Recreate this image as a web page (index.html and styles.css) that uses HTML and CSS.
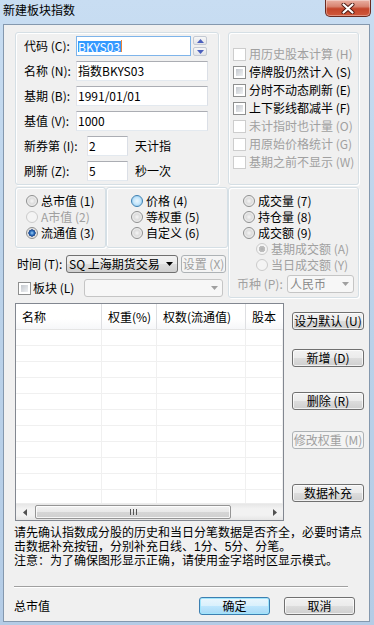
FILE: index.html
```html
<!DOCTYPE html>
<html lang="zh-CN">
<head>
  <meta charset="UTF-8">
  <title>新建板块指数</title>
  <link rel="stylesheet" href="styles.css">
</head>
<body>
  <div class="titlebar">
    <span class="title">新建板块指数</span>
    <div class="close">
      <svg width="14" height="11" viewBox="0 0 14 11">
        <path d="M2.5 1.5 L11.5 9.5 M11.5 1.5 L2.5 9.5" stroke="#4a1710" stroke-width="4" stroke-linecap="round"/>
        <path d="M2.5 1.5 L11.5 9.5 M11.5 1.5 L2.5 9.5" stroke="#fff" stroke-width="2.2" stroke-linecap="round"/>
      </svg>
    </div>
  </div>

  <div class="client">
    <!-- infos de base + options -->
    <div class="top">
      <div class="group main-info">
        <div class="field">
          <label>代码 (C):</label>
          <div class="input code"><span class="sel">BKYS03</span><span class="caret"></span></div>
          <div class="spin">
            <span class="spin-btn"><svg width="7" height="4"><path d="M0 4 L3.5 0 L7 4Z" fill="#4b5fbd"/></svg></span>
            <span class="spin-btn"><svg width="7" height="4"><path d="M0 0 L3.5 4 L7 0Z" fill="#4b5fbd"/></svg></span>
          </div>
        </div>
        <div class="field">
          <label>名称 (N):</label>
          <div class="input">指数BKYS03</div>
        </div>
        <div class="field">
          <label>基期 (B):</label>
          <div class="input">1991/01/01</div>
        </div>
        <div class="field">
          <label>基值 (V):</label>
          <div class="input">1000</div>
        </div>
        <div class="field">
          <label class="wide">新券第 (I):</label>
          <div class="input small">2</div>
          <span class="unit">天计指</span>
        </div>
        <div class="field">
          <label class="wide">刷新 (Z):</label>
          <div class="input small">5</div>
          <span class="unit">秒一次</span>
        </div>
      </div>

      <div class="group options">
        <div class="check disabled"><span class="box"></span>用历史股本计算 (H)</div>
        <div class="check"><span class="box"></span>停牌股仍然计入 (S)</div>
        <div class="check"><span class="box"></span>分时不动态刷新 (E)</div>
        <div class="check"><span class="box"></span>上下影线都减半 (F)</div>
        <div class="check disabled"><span class="box"></span>未计指时也计量 (O)</div>
        <div class="check disabled"><span class="box"></span>用原始价格统计 (G)</div>
        <div class="check disabled"><span class="box"></span>基期之前不显示 (W)</div>
      </div>
    </div>

    <!-- mode de pondération -->
    <div class="mid">
      <div class="mid-left">
        <div class="radio-groups">
          <div class="group rg1">
            <div class="radio"><span class="dot"></span>总市值 (1)</div>
            <div class="radio disabled"><span class="dot"></span>A市值 (2)</div>
            <div class="radio"><span class="dot on"></span>流通值 (3)</div>
          </div>
          <div class="group rg2">
            <div class="radio"><span class="dot hot"></span>价格 (4)</div>
            <div class="radio"><span class="dot"></span>等权重 (5)</div>
            <div class="radio"><span class="dot"></span>自定义 (6)</div>
          </div>
        </div>
        <div class="time-row">
          <span class="time-label">时间 (T):</span>
          <div class="combo">
            <span>SQ 上海期货交易</span>
            <svg class="arrow" width="7" height="4"><path d="M0 0 L3.5 4 L7 0Z" fill="#000"/></svg>
          </div>
          <div class="btn disabled set-btn">设置 (X)</div>
        </div>
        <div class="block-row">
          <span class="box"></span>
          <span class="block-label">板块 (L)</span>
          <div class="combo off block-combo">
            <svg class="arrow" width="7" height="4"><path d="M0 0 L3.5 4 L7 0Z" fill="#a0a0a0"/></svg>
          </div>
        </div>
      </div>

      <div class="group trade">
        <div class="radio"><span class="dot"></span>成交量 (7)</div>
        <div class="radio"><span class="dot"></span>持仓量 (8)</div>
        <div class="radio"><span class="dot"></span>成交额 (9)</div>
        <div class="radio sub disabled"><span class="dot on"></span>基期成交额 (A)</div>
        <div class="radio sub disabled"><span class="dot"></span>当日成交额 (Y)</div>
        <div class="currency">
          <span class="cur-label">币种 (P):</span>
          <div class="combo off cur-combo">
            <span>人民币</span>
            <svg class="arrow" width="7" height="4"><path d="M0 0 L3.5 4 L7 0Z" fill="#a0a0a0"/></svg>
          </div>
        </div>
      </div>
    </div>

    <!-- liste des composants -->
    <div class="list-area">
      <div class="list">
        <div class="thead">
          <div class="c1">名称</div>
          <div class="c2">权重(%)</div>
          <div class="c3">权数(流通值)</div>
          <div class="c4">股本</div>
        </div>
        <div class="tbody">
          <div class="tr"><div class="c1"></div><div class="c2"></div><div class="c3"></div><div class="c4"></div></div>
          <div class="tr"><div class="c1"></div><div class="c2"></div><div class="c3"></div><div class="c4"></div></div>
          <div class="tr"><div class="c1"></div><div class="c2"></div><div class="c3"></div><div class="c4"></div></div>
          <div class="tr"><div class="c1"></div><div class="c2"></div><div class="c3"></div><div class="c4"></div></div>
          <div class="tr"><div class="c1"></div><div class="c2"></div><div class="c3"></div><div class="c4"></div></div>
          <div class="tr"><div class="c1"></div><div class="c2"></div><div class="c3"></div><div class="c4"></div></div>
          <div class="tr"><div class="c1"></div><div class="c2"></div><div class="c3"></div><div class="c4"></div></div>
          <div class="tr"><div class="c1"></div><div class="c2"></div><div class="c3"></div><div class="c4"></div></div>
          <div class="tr"><div class="c1"></div><div class="c2"></div><div class="c3"></div><div class="c4"></div></div>
          <div class="tr"><div class="c1"></div><div class="c2"></div><div class="c3"></div><div class="c4"></div></div>
          <div class="tr"><div class="c1"></div><div class="c2"></div><div class="c3"></div><div class="c4"></div></div>
        </div>
        <div class="hscroll">
          <span class="sb-arrow"><svg width="4" height="7"><path d="M4 0 L0 3.5 L4 7Z" fill="#505050"/></svg></span>
          <div class="thumb"><span class="grip"></span></div>
          <span class="sb-arrow right"><svg width="4" height="7"><path d="M0 0 L4 3.5 L0 7Z" fill="#505050"/></svg></span>
        </div>
      </div>

      <div class="side">
        <div class="btn b-default">设为默认 (U)</div>
        <div class="btn b-add">新增 (D)</div>
        <div class="btn b-del">删除 (R)</div>
        <div class="btn disabled b-edit">修改权重 (M)</div>
        <div class="btn b-fill">数据补充</div>
      </div>
    </div>

    <div class="note">
      <p>请先确认指数成分股的历史和当日分笔数据是否齐全，必要时请点<br>击数据补充按钮，分别补充日线、1分、5分、分笔。</p>
      <p>注意：为了确保图形显示正确，请使用金字塔时区显示模式。</p>
    </div>

    <div class="sep"></div>

    <div class="foot">
      <span class="status">总市值</span>
      <div class="btn primary">确定</div>
      <div class="btn">取消</div>
    </div>
  </div>
</body>
</html>
```

FILE: styles.css
```css
* {
  box-sizing: border-box;
}
body {
  margin: 0;
  width: 374px;
  height: 625px;
  overflow: hidden;
  font: 12px/16px "Noto Sans CJK SC", "Noto Sans", sans-serif;
  color: #000;
  background: linear-gradient(180deg, #c8ddf2 0, #bcd3ea 40%, #b4cce6 100%);
}

/* barre de titre */
.titlebar {
  height: 24px;
  display: flex;
  align-items: flex-start;
}
.title {
  padding: 3px 0 0 3px;
  line-height: 14px;
  font-size: 12px;
  color: #000;
}
.close {
  margin-left: auto;
  margin-right: 3px;
  width: 46px;
  height: 17px;
  border: 1px solid #6a2a20;
  border-top: none;
  border-radius: 0 0 5px 5px;
  background: linear-gradient(#eab0a3 0, #d88572 40%, #c4452b 55%, #d0593c 100%);
  box-shadow: inset 0 0 0 1px rgba(255,255,255,0.35);
  display: flex;
  align-items: center;
  justify-content: center;
}

/* zone client */
.client {
  margin-left: 3px;
  width: 367px;
  height: 598px;
  border: 1px solid #8498ae;
  background: #f0f0f0;
}
.group {
  border: 1px solid #d5dfe5;
  border-radius: 3px;
  box-shadow: inset 1px 1px 0 #fff, 1px 1px 0 #fff;
}

.top {
  display: flex;
  gap: 9px;
  margin: 7px 0 0 11px;
}
.main-info {
  width: 204px;
  height: 153px;
  padding: 3px 0 0 8px;
}
.field {
  display: flex;
  align-items: center;
  height: 20px;
  margin-bottom: 5px;
}
.field label {
  width: 52px;
  white-space: nowrap;
}
.field label.wide {
  width: 63px;
}
.input {
  width: 132px;
  height: 20px;
  background: #fff;
  border: 1px solid;
  border-color: #abadb3 #dbdfe6 #e3e9ef #e2e3ea;
  padding-left: 1px;
  line-height: 18px;
  white-space: nowrap;
}
.input.code {
  width: 115px;
  border-color: #7eb4ea;
  display: flex;
  align-items: center;
}
.input.small {
  width: 41px;
}
.sel {
  background: #3399ff;
  color: #fff;
  line-height: 11px;
  padding-right: 1px;
}
.caret {
  width: 1px;
  height: 12px;
  background: #e8833a;
}
.spin {
  margin-left: 2px;
  display: flex;
  flex-direction: column;
  gap: 2px;
}
.spin-btn {
  width: 14px;
  height: 9px;
  border: 1px solid #c3c9d3;
  border-radius: 2px;
  background: linear-gradient(#f7f7f7, #e2e4e8);
  display: flex;
  align-items: center;
  justify-content: center;
}
.unit {
  margin-left: 7px;
}

.options {
  width: 131px;
  height: 153px;
  padding: 12px 0 0 4px;
}
.check {
  display: flex;
  align-items: center;
  height: 18px;
  white-space: nowrap;
}
.box {
  width: 13px;
  height: 13px;
  margin-right: 3px;
  border: 1px solid #8e8f8f;
  padding: 2px;
  background: linear-gradient(135deg, #c4c8ce, #eef0f2) content-box, #fff;
  flex: none;
}
.disabled {
  color: #a0a0a0;
}
.disabled .box {
  border-color: #cdcdcd;
  background: #fff;
}

/* boutons radio */
.mid {
  display: flex;
  margin: 2px 0 0 11px;
  height: 111px;
}
.mid-left {
  width: 213px;
}
.radio-groups {
  display: flex;
  height: 61px;
}
.rg1 {
  width: 91px;
  padding: 5px 0 0 10px;
}
.rg2 {
  width: 122px;
  padding: 5px 0 0 24px;
}
.radio {
  display: flex;
  align-items: center;
  height: 16px;
  white-space: nowrap;
}
.dot {
  width: 12px;
  height: 12px;
  margin-right: 3px;
  border-radius: 50%;
  border: 1px solid #8e8f8f;
  background: radial-gradient(circle, #f6f6f6 0, #dcdcdc 3px, #e6e6e6 4px, #fafafa 6px);
  flex: none;
}
.dot.on {
  background: radial-gradient(circle, #9fd0f7 0, #2e72c0 2px, #163f86 3.4px, #d8d8d8 3.8px, #fafafa 6px);
}
.dot.hot {
  border-color: #3c7fb1;
  background: radial-gradient(circle, #eaf6fd 0, #c4e5fa 3.5px, #a9d8f6 4.5px, #e8f4fc 6px);
}
.disabled .dot {
  border-color: #cbcbcb;
  background: #f4f4f4;
}
.disabled .dot.on {
  background: radial-gradient(circle, #b0b0b0 0, #c0c0c0 3px, #f4f4f4 3.5px);
}

.time-row {
  display: flex;
  align-items: center;
  height: 18px;
  margin: 7px 0 0 2px;
}
.time-label {
  width: 49px;
  white-space: nowrap;
}
.combo {
  display: flex;
  align-items: center;
  width: 112px;
  height: 18px;
  padding-left: 2px;
  border: 1px solid #707070;
  border-radius: 3px;
  background: linear-gradient(#f2f2f2 0, #ebebeb 50%, #dddddd 50%, #cfcfcf 100%);
  white-space: nowrap;
}
.combo .arrow {
  margin-left: auto;
  margin-right: 4px;
}
.combo.off {
  border-color: #c5c5c5;
  background: #f7f7f7;
  color: #8a8a8a;
}
.set-btn {
  margin-left: 3px;
  width: 45px;
}

.block-row {
  display: flex;
  align-items: center;
  height: 18px;
  margin: 6px 0 0 3px;
}
.block-row .box {
  margin-right: 2px;
}
.block-label {
  width: 51px;
  white-space: nowrap;
}
.block-combo {
  width: 139px;
}

.trade {
  width: 131px;
  height: 111px;
  padding: 5px 0 0 8px;
}
.trade .radio {
  margin-left: 6px;
}
.trade .radio.sub {
  margin-left: 19px;
}
.currency {
  display: flex;
  align-items: center;
  margin-top: 2px;
  height: 18px;
}
.cur-label {
  width: 50px;
  color: #a0a0a0;
  white-space: nowrap;
}
.cur-combo {
  width: 67px;
}

/* liste */
.list-area {
  display: flex;
  margin: 5px 0 0 11px;
}
.list {
  width: 269px;
  height: 218px;
  border: 1px solid #828790;
  background: #fff;
  display: flex;
  flex-direction: column;
}
.thead {
  display: flex;
  height: 26px;
  flex: none;
  border-bottom: 1px solid #e5e5e5;
  background: linear-gradient(#fff 0, #fff 60%, #f6f7f9 100%);
  line-height: 25px;
}
.thead > div {
  padding-left: 6px;
  border-right: 1px solid #dedfe2;
  white-space: nowrap;
  overflow: hidden;
}
.c1 { width: 86px; flex: none; }
.c2 { width: 55px; flex: none; }
.c3 { width: 89px; flex: none; }
.c4 { flex: 1; }
.thead > .c4 {
  border-right: none;
}
.tbody {
  flex: 1;
  overflow: hidden;
}
.tr {
  display: flex;
  height: 16px;
  border-bottom: 1px solid #f0f0f0;
}
.tr > div {
  border-right: 1px solid #f0f0f0;
}
.hscroll {
  height: 17px;
  flex: none;
  display: flex;
  align-items: center;
  background: linear-gradient(#e6e6e6, #f2f2f2 30%, #f2f2f2 70%, #e6e6e6);
  border-top: 1px solid #ececec;
}
.sb-arrow {
  width: 17px;
  height: 16px;
  display: flex;
  align-items: center;
  justify-content: center;
}
.sb-arrow.right {
  margin-left: auto;
}
.thumb {
  margin-left: 2px;
  width: 196px;
  height: 14px;
  border: 1px solid #959595;
  border-radius: 2px;
  background: linear-gradient(#f3f3f3 0, #e8e8e8 50%, #d6d6d6 51%, #cfcfcf 100%);
  box-shadow: inset 0 0 0 1px rgba(255,255,255,0.8);
  display: flex;
  align-items: center;
  justify-content: center;
}
.grip {
  width: 7px;
  height: 6px;
  background: repeating-linear-gradient(90deg, #555 0, #555 1px, transparent 1px, transparent 3px);
}

.side {
  margin-left: 8px;
  width: 72px;
  display: flex;
  flex-direction: column;
}
.btn {
  height: 18px;
  border: 1px solid #707070;
  border-radius: 3px;
  background: linear-gradient(#f2f2f2 0, #ebebeb 50%, #dddddd 50%, #cfcfcf 100%);
  box-shadow: inset 0 0 0 1px rgba(255,255,255,0.7);
  text-align: center;
  line-height: 16px;
  white-space: nowrap;
}
.btn.disabled {
  border-color: #adb2b5;
  background: #f4f4f4;
  box-shadow: none;
  color: #a0a0a0;
}
.btn.primary {
  border-color: #3c7fb1;
  background: linear-gradient(#eaf6fd 0, #d9f0fc 50%, #bee6fd 50%, #a7d9f5 100%);
  box-shadow: inset 0 0 0 1px #a0e5fc;
}
.b-default { margin-top: 9px; }
.b-add { margin-top: 19px; }
.b-del { margin-top: 25px; }
.b-edit { margin-top: 21px; }
.b-fill { margin-top: 35px; }

/* texte d'aide : police latine en premier pour des lignes serrées */
.note {
  margin: 5px 0 0 10px;
  white-space: nowrap;
  font-family: "Liberation Sans", "Noto Sans CJK SC", sans-serif;
  line-height: 14px;
}
.note p {
  margin: 0;
}
.sep {
  margin: 18px 0 0 10px;
  width: 334px;
  border-top: 1px solid #a0a0a0;
  border-bottom: 1px solid #fff;
}
.foot {
  display: flex;
  align-items: center;
  height: 18px;
  margin: 9px 0 0 10px;
}
.status {
  width: 188px;
}
.foot .btn {
  width: 72px;
  margin-right: 14px;
}
```
